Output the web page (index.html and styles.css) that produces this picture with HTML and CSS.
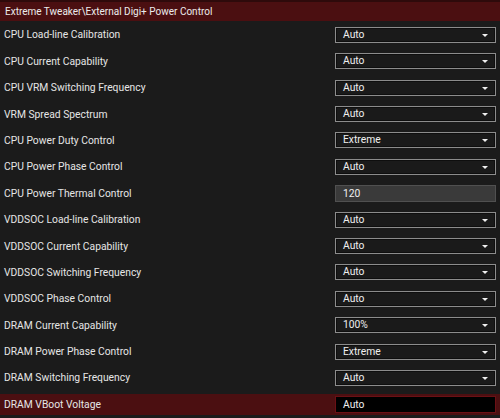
FILE: index.html
```html
<!DOCTYPE html>
<html lang="en">
  <head>
    <meta charset="UTF-8" />
    <meta name="viewport" content="width=device-width, initial-scale=1.0" />
    <title>External Digi+ Power Control</title>
    <link rel="stylesheet" href="styles.css">
  </head>
  <body>
    <div class="crumb">Extreme Tweaker\External Digi+ Power Control</div>
    <div class="items">
      <div class="item">
        <span class="label">CPU Load-line Calibration</span>
        <div class="select">Auto</div>
      </div>
      <div class="item">
        <span class="label">CPU Current Capability</span>
        <div class="select">Auto</div>
      </div>
      <div class="item">
        <span class="label">CPU VRM Switching Frequency</span>
        <div class="select">Auto</div>
      </div>
      <div class="item">
        <span class="label">VRM Spread Spectrum</span>
        <div class="select">Auto</div>
      </div>
      <div class="item">
        <span class="label">CPU Power Duty Control</span>
        <div class="select">Extreme</div>
      </div>
      <div class="item">
        <span class="label">CPU Power Phase Control</span>
        <div class="select">Auto</div>
      </div>
      <div class="item">
        <span class="label">CPU Power Thermal Control</span>
        <div class="value">120</div>
      </div>
      <div class="item">
        <span class="label">VDDSOC Load-line Calibration</span>
        <div class="select">Auto</div>
      </div>
      <div class="item">
        <span class="label">VDDSOC Current Capability</span>
        <div class="select">Auto</div>
      </div>
      <div class="item">
        <span class="label">VDDSOC Switching Frequency</span>
        <div class="select">Auto</div>
      </div>
      <div class="item">
        <span class="label">VDDSOC Phase Control</span>
        <div class="select">Auto</div>
      </div>
      <div class="item">
        <span class="label">DRAM Current Capability</span>
        <div class="select">100%</div>
      </div>
      <div class="item">
        <span class="label">DRAM Power Phase Control</span>
        <div class="select">Extreme</div>
      </div>
      <div class="item">
        <span class="label">DRAM Switching Frequency</span>
        <div class="select">Auto</div>
      </div>
      <div class="item selected">
        <span class="label">DRAM VBoot Voltage</span>
        <div class="value">Auto</div>
      </div>
    </div>
  </body>
</html>
```

FILE: styles.css
```css
body {
  margin: 0;
  background-color: #1b1b1b;
  color: #e6e6e6;
  font-family: "Roboto", sans-serif;
  font-size: 10.3px;
  height: 418px;
  overflow: hidden;
}
.crumb {
  height: 21px;
  line-height: 19px;
  padding-left: 5px;
  font-size: 10px;
  background-color: #4b0f11;
  border-top: 2px solid #2e0a0b;
  box-sizing: border-box;
  color: #ececec;
}
.items {
  display: flex;
  flex-direction: column;
  gap: 5.4px;
  padding-top: 3.4px;
}
.item {
  display: flex;
  align-items: center;
  justify-content: space-between;
  height: 21px;
  padding-left: 4px;
  padding-right: 4px;
}
.item.selected {
  background-color: #4b0f11;
}
.select,
.value {
  width: 161px;
  height: 16px;
  box-sizing: border-box;
  padding-left: 7px;
  line-height: 14px;
  border: 1px solid #8c8c8c;
  box-shadow: inset 0 0 0 1px #0e0e0e;
  background-color: #1a1a1a;
  color: #f0f0f0;
  position: relative;
}
.select::after {
  content: "";
  position: absolute;
  right: 7px;
  top: 6px;
  border-left: 3px solid transparent;
  border-right: 3px solid transparent;
  border-top: 3px solid #f0f0f0;
}
.value {
  height: 17px;
  line-height: 15px;
  background-color: #3a3a3a;
  border-color: #505050;
  box-shadow: none;
}
.selected .value {
  background-color: #000;
  border-color: #6b1015;
}
```
